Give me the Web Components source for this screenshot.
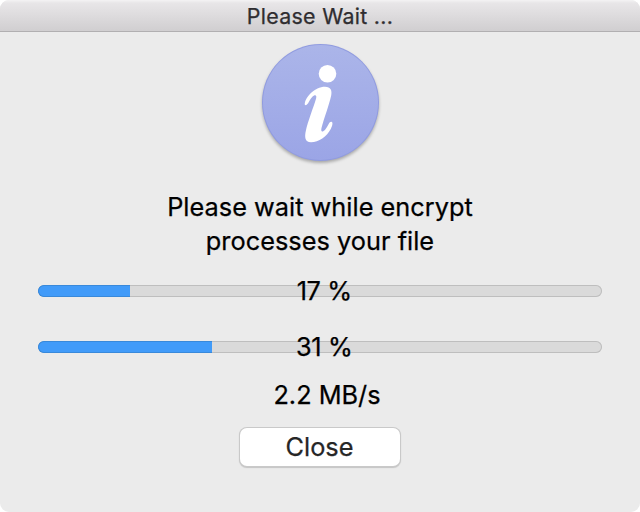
<!DOCTYPE html>
<html lang="en">
<head>
<meta charset="utf-8">
<title>Please Wait ...</title>
<style>
html{background:#fff}
body{margin:0;font-family:Inter,"Liberation Sans",sans-serif;color:#000;-webkit-text-stroke:.25px}
</style>
</head>
<body>
<mac-window heading="Please Wait ...">
  <info-icon></info-icon>
  <status-message><span>Please wait while encrypt</span><span>processes your file</span></status-message>
  <progress-row value="17" fill="92"></progress-row>
  <progress-row value="31" fill="174"></progress-row>
  <transfer-rate>2.2 MB/s</transfer-rate>
  <push-button>Close</push-button>
</mac-window>
<script>
const define = (name, html, setup) => customElements.define(name, class extends HTMLElement {
  constructor() {
    super();
    this.attachShadow({mode: 'open'}).innerHTML = html;
  }
  connectedCallback() { if (setup) setup(this, this.shadowRoot); }
});

define('mac-window', `<style>
:host{display:flex;flex-direction:column;width:640px;height:512px;box-sizing:border-box;background:#ebebeb;border-radius:9px;overflow:hidden}
header{box-sizing:border-box;height:32px;flex:none;text-align:center;font-size:21.4px;line-height:32px;color:#2f2d30;background:linear-gradient(#f4f3f4 0,#e8e6e8 3px,#d1cfd1 30px);border-bottom:1px solid #b1afb1;letter-spacing:.3px}
main{display:flex;flex-direction:column;align-items:center;flex:1;padding-top:8px}
</style><header></header><main><slot></slot></main>`,
(el, root) => { root.querySelector('header').textContent = el.getAttribute('heading'); });

define('info-icon', `<style>
:host{display:block;width:126px;height:126px}
svg{display:block}
.disc{filter:drop-shadow(0 2.5px 1.8px rgba(0,0,0,.28))}
</style><svg width="126" height="126" viewBox="0 0 126 126">
<defs><linearGradient id="g" x2="0" y2="1"><stop stop-color="#abb5e9"/><stop offset="1" stop-color="#9ba5e6"/></linearGradient></defs>
<circle class="disc" cx="63.5" cy="62.5" r="58.5" fill="#909be0"/>
<circle cx="63.5" cy="62.5" r="57.5" fill="url(#g)"/>
<circle cx="70.5" cy="33.7" r="8.8" fill="#fff"/>
<path fill="#fff" d="M47.8 64.8C47.3 57.5 58 46.7 68 46.7C73.8 46.7 75.2 50.5 74.2 55.5C72.2 64.5 66.5 80 64.5 88C63.5 92.7 65.9 92 68.1 89.7C70.9 86.8 71.9 81.6 74.3 81.8C76.6 82 75 86.7 73.9 88.8C69.8 96.7 61.8 102.2 54 102.2C47.7 102.2 47.5 96.7 48.9 90.5C50.7 82 56.6 67 59.1 58.5C60.1 54.8 57.8 54.2 55 57.3C52.4 60.1 51.2 64.6 48.9 65.3Z"/>
</svg>`);

define('status-message', `<style>
:host{display:flex;flex-direction:column;align-items:center;margin-top:24px;height:73px;font-size:25.3px;line-height:34px;letter-spacing:.03px}
::slotted(span){display:block;white-space:pre}
</style><slot></slot>`);

define('progress-row', `<style>
:host{display:grid;width:564px;height:56px;align-items:center}
.track,.label{grid-area:1/1}
.track{height:12px;border-radius:6px;overflow:hidden;background:#dadada;box-shadow:inset 0 0 0 1px #bebebe}
.fill{height:100%;background:#419bf9;box-shadow:inset 0 1px #3989da,inset 1px 0 #3989da,inset 0 -1px #3989da;border-radius:6px 0 0 6px}
.label{z-index:1;text-align:center;font-size:25.3px;line-height:34px;padding-left:8.5px;letter-spacing:-.35px}
</style><div class="track"><div class="fill"></div></div><div class="label"></div>`,
(el, root) => {
  root.querySelector('.fill').style.width = el.getAttribute('fill') + 'px';
  root.querySelector('.label').textContent = el.getAttribute('value') + ' %';
});

define('transfer-rate', `<style>
:host{display:block;font-size:25.3px;line-height:34px;padding-left:14px;margin-top:3px}
</style><slot></slot>`);

define('push-button', `<style>
:host{display:block;margin-top:16px}
button{box-sizing:border-box;display:block;width:160px;height:38px;padding:0 1px 0 0;border:0;border-radius:7px;background:#fff;color:#262626;font:25.3px/38px Inter,"Liberation Sans",sans-serif;box-shadow:0 0 0 1px #c9c9c9,0 1px 1px 1px rgba(0,0,0,.17)}
</style><button><slot></slot></button>`);
</script>
</body>
</html>
